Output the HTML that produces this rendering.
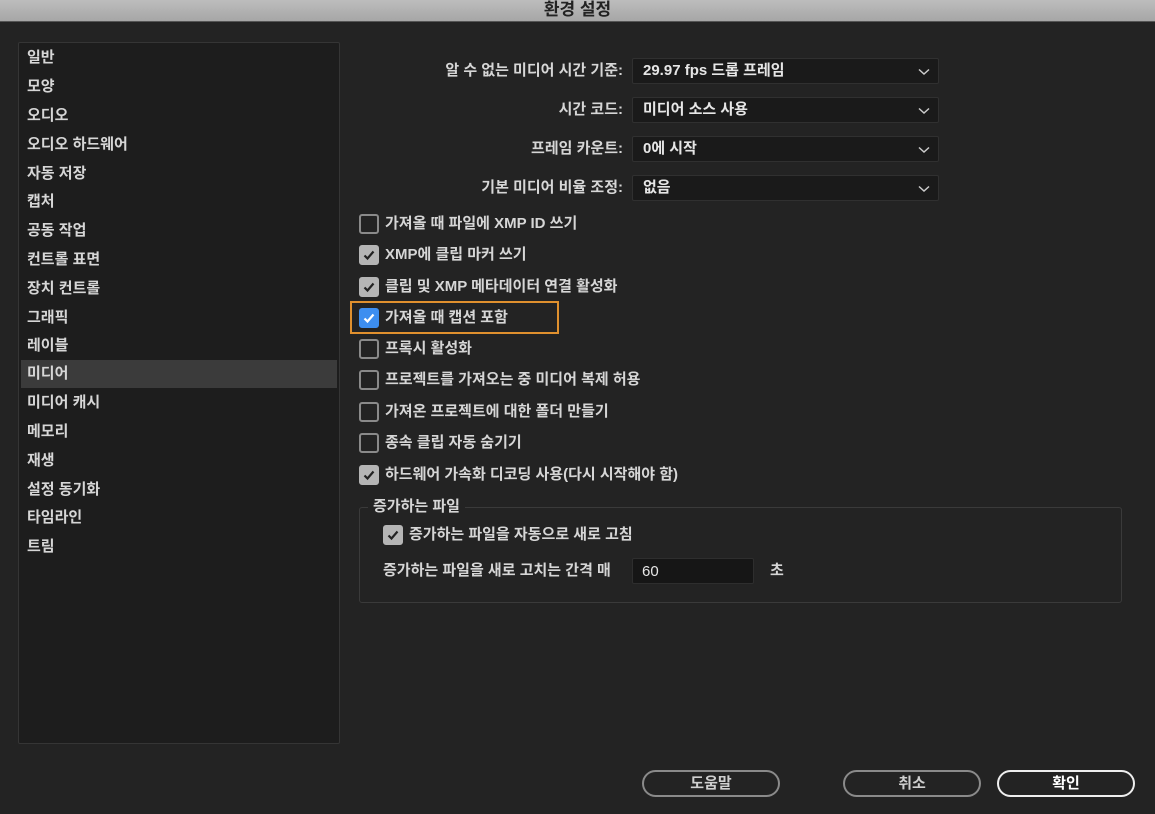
<!DOCTYPE html>
<html><head><meta charset="utf-8"><style>
*{box-sizing:border-box;margin:0;padding:0}
body{width:1155px;height:814px;background:#232323;font-family:"Liberation Sans","Noto Sans CJK KR",sans-serif;color:#d6d6d6;font-size:15px;font-weight:bold;position:relative;overflow:hidden}
.title{position:absolute;left:0;top:0;width:1155px;height:22px;background:linear-gradient(#bdbdbd,#a6a6a6);border-bottom:1px solid #555;text-align:center;color:#222;font-size:17px;line-height:20px;font-weight:bold}
.side{position:absolute;left:18px;top:42px;width:322px;height:702px;background:#1d1d1d;border:1px solid #353535;border-radius:2px}
.side div{position:absolute;left:2px;width:316px;height:28px;line-height:28px;padding-left:6px}
.side .sel{background:#3b3b3b}
.lbl{position:absolute;right:532px;text-align:right;height:26px;line-height:26px}
.dd{position:absolute;left:632px;width:307px;height:26px;background:#1a1a1a;border:1px solid #303030;border-radius:2px;line-height:24px;padding-left:10px;color:#e6e6e6}
.dd svg{position:absolute;right:8px;top:9px}
.cb{position:absolute;left:359px;height:20px;line-height:20px;padding-left:26px;white-space:nowrap}
.cb i{position:absolute;left:0;top:0;width:20px;height:20px;border:2px solid #8a8a8a;border-radius:3px}
.cb i.on{background:#b5b5b5;border-color:#b5b5b5}
.cb i.blue{background:#3d8ef0;border-color:#3d8ef0}
.cb i svg{position:absolute;left:2px;top:2px}
.grp{position:absolute;left:359px;top:507px;width:763px;height:96px;border:1px solid #3a3a3a;border-radius:3px}
.btn{position:absolute;top:770px;width:138px;height:27px;border:2px solid #8a8a8a;border-radius:14px;text-align:center;line-height:23px;color:#cfcfcf}
</style></head><body>
<div class="title">환경 설정</div>
<div class="side">
<div style="top:1px">일반</div><div style="top:30px">모양</div><div style="top:59px">오디오</div><div style="top:88px">오디오 하드웨어</div><div style="top:117px">자동 저장</div><div style="top:145px">캡처</div><div style="top:174px">공동 작업</div><div style="top:203px">컨트롤 표면</div><div style="top:232px">장치 컨트롤</div><div style="top:261px">그래픽</div><div style="top:289px">레이블</div><div class="sel" style="top:317px">미디어</div><div style="top:346px">미디어 캐시</div><div style="top:375px">메모리</div><div style="top:404px">재생</div><div style="top:433px">설정 동기화</div><div style="top:461px">타임라인</div><div style="top:490px">트림</div>
</div>
<div class="lbl" style="top:58px">알 수 없는 미디어 시간 기준:</div>
<div class="lbl" style="top:97px">시간 코드:</div>
<div class="lbl" style="top:136px">프레임 카운트:</div>
<div class="lbl" style="top:175px">기본 미디어 비율 조정:</div>
<div class="dd" style="top:58px">29.97 fps 드롭 프레임<svg width="12" height="8"><path d="M1 1.5l5 4.5 5-4.5" stroke="#ccc" stroke-width="1.5" fill="none"/></svg></div>
<div class="dd" style="top:97px">미디어 소스 사용<svg width="12" height="8"><path d="M1 1.5l5 4.5 5-4.5" stroke="#ccc" stroke-width="1.5" fill="none"/></svg></div>
<div class="dd" style="top:136px">0에 시작<svg width="12" height="8"><path d="M1 1.5l5 4.5 5-4.5" stroke="#ccc" stroke-width="1.5" fill="none"/></svg></div>
<div class="dd" style="top:175px">없음<svg width="12" height="8"><path d="M1 1.5l5 4.5 5-4.5" stroke="#ccc" stroke-width="1.5" fill="none"/></svg></div>

<div class="cb" style="top:214px"><i></i>가져올 때 파일에 XMP ID 쓰기</div>
<div class="cb" style="top:245px"><i class="on"><svg width="12" height="12"><path d="M1.5 6.5l3 3 6-7" stroke="#222" stroke-width="2.2" fill="none"/></svg></i>XMP에 클립 마커 쓰기</div>
<div class="cb" style="top:277px"><i class="on"><svg width="12" height="12"><path d="M1.5 6.5l3 3 6-7" stroke="#222" stroke-width="2.2" fill="none"/></svg></i>클립 및 XMP 메타데이터 연결 활성화</div>
<div style="position:absolute;left:350px;top:301px;width:209px;height:33px;border:2px solid #e0902e"></div>
<div class="cb" style="top:308px"><i class="blue"><svg width="12" height="12"><path d="M1.5 6.5l3 3 6-7" stroke="#fff" stroke-width="2.2" fill="none"/></svg></i>가져올 때 캡션 포함</div>
<div class="cb" style="top:339px"><i></i>프록시 활성화</div>
<div class="cb" style="top:370px"><i></i>프로젝트를 가져오는 중 미디어 복제 허용</div>
<div class="cb" style="top:402px"><i></i>가져온 프로젝트에 대한 폴더 만들기</div>
<div class="cb" style="top:433px"><i></i>종속 클립 자동 숨기기</div>
<div class="cb" style="top:465px"><i class="on"><svg width="12" height="12"><path d="M1.5 6.5l3 3 6-7" stroke="#222" stroke-width="2.2" fill="none"/></svg></i>하드웨어 가속화 디코딩 사용(다시 시작해야 함)</div>

<div class="grp"></div>
<div style="position:absolute;left:368px;top:498px;padding:0 5px;background:#232323;line-height:18px">증가하는 파일</div>
<div class="cb" style="top:525px;left:383px"><i class="on"><svg width="12" height="12"><path d="M1.5 6.5l3 3 6-7" stroke="#222" stroke-width="2.2" fill="none"/></svg></i>증가하는 파일을 자동으로 새로 고침</div>
<div style="position:absolute;left:383px;top:561px;line-height:20px">증가하는 파일을 새로 고치는 간격 매</div>
<div style="position:absolute;left:632px;top:558px;width:122px;height:26px;background:#161616;border:1px solid #2e2e2e;border-radius:2px;padding-left:9px;line-height:26px;font-weight:normal;color:#e6e6e6">60</div>
<div style="position:absolute;left:770px;top:561px;line-height:20px">초</div>

<div class="btn" style="left:642px">도움말</div>
<div class="btn" style="left:843px">취소</div>
<div class="btn" style="left:997px;border-color:#eee;color:#fff">확인</div>
</body></html>
